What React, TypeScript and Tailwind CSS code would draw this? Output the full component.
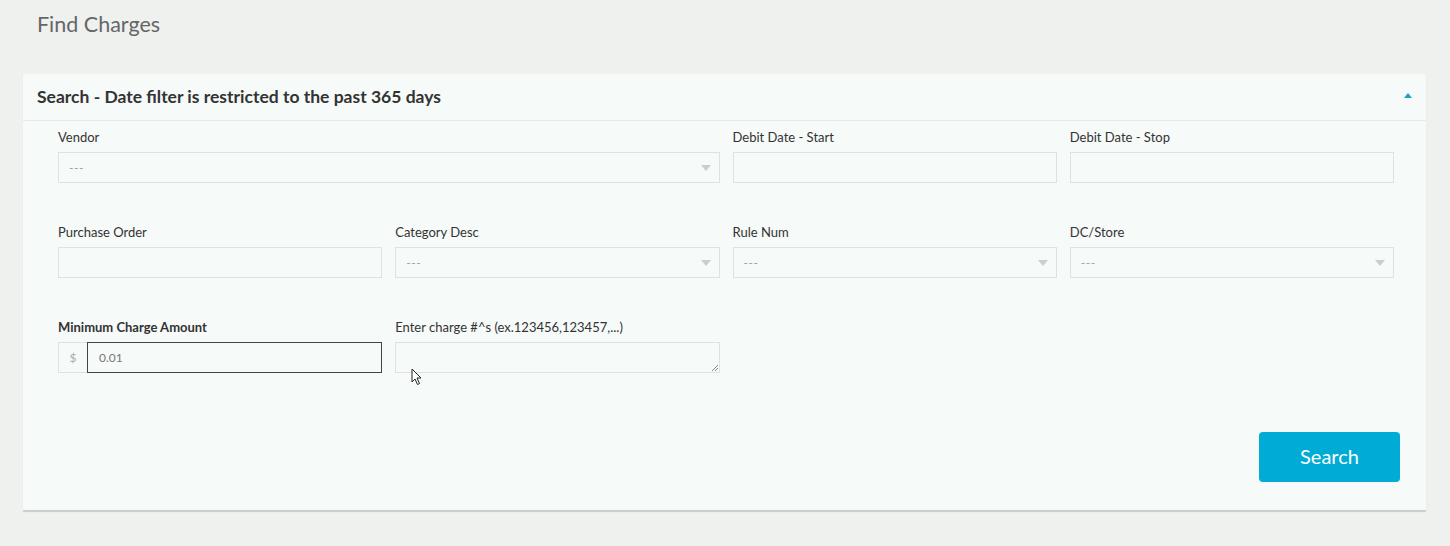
import React from 'react';

const font = { fontFamily: 'Lato, "Open Sans", "Liberation Sans", sans-serif' };

function Label({ children, bold }: { children: React.ReactNode; bold?: boolean }) {
  return (
    <div className={`h-[18px] text-[13px] leading-[18px] mb-[6px] text-[#333] ${bold ? 'font-bold' : ''}`}>
      {children}
    </div>
  );
}

function TextBox() {
  return <div className="h-[31px] border border-[#dde3df] bg-[#f6faf8]" />;
}

function SelectBox() {
  return (
    <div className="h-[31px] border border-[#dde3df] bg-[#f6faf8] flex items-center justify-between pl-[10px] pr-[8px]">
      <span className="text-[12px] text-[#9aa09c] tracking-[0.5px]">---</span>
      <svg width="10" height="6" viewBox="0 0 10 6">
        <path d="M0 0 L10 0 L5 6 Z" fill="#c9cfcb" />
      </svg>
    </div>
  );
}

export default function App() {
  return (
    <div className="min-h-[546px] bg-[#eef1ee] pt-[11px] px-[23px] pb-[36px]" style={font}>
      <h1 className="pl-[14px] text-[21.5px] leading-[26px] text-[#666] mb-[37px]">Find Charges</h1>

      <div className="bg-[#f6faf8] rounded-t-[3px] shadow-[0_2px_1px_rgba(0,0,0,0.15)] w-[1403px]">
        <div className="h-[47px] flex items-center justify-between pl-[14px] pr-[14px] border-b border-[#e6ebe8]">
          <span className="text-[17.5px] font-bold text-[#333]">Search - Date filter is restricted to the past 365 days</span>
          <svg width="8" height="5" viewBox="0 0 8 5" className="mt-[-4px]">
            <path d="M0 5 L8 5 L4 0 Z" fill="#1aa3c8" />
          </svg>
        </div>

        <div className="pt-[7px] pl-[35px] pr-[32px] pb-[28px]">
          <div className="grid grid-cols-4 gap-x-[13px] gap-y-[40px]">
            <div className="col-span-2">
              <Label>Vendor</Label>
              <SelectBox />
            </div>
            <div>
              <Label>Debit Date - Start</Label>
              <TextBox />
            </div>
            <div>
              <Label>Debit Date - Stop</Label>
              <TextBox />
            </div>

            <div>
              <Label>Purchase Order</Label>
              <TextBox />
            </div>
            <div>
              <Label>Category Desc</Label>
              <SelectBox />
            </div>
            <div>
              <Label>Rule Num</Label>
              <SelectBox />
            </div>
            <div>
              <Label>DC/Store</Label>
              <SelectBox />
            </div>

            <div>
              <Label bold>Minimum Charge Amount</Label>
              <div className="flex h-[31px]">
                <div className="w-[29px] border border-r-0 border-[#dde3df] flex items-center justify-center text-[12px] text-[#aaa]">$</div>
                <div className="flex-1 border border-[#444] flex items-center pl-[11px] text-[12px] text-[#777]">0.01</div>
              </div>
            </div>
            <div className="relative">
              <Label>Enter charge #^s (ex.123456,123457,...)</Label>
              <div className="relative h-[31px] border border-[#dde3df] bg-[#f6faf8]">
                <svg width="7" height="7" viewBox="0 0 7 7" className="absolute right-[1px] bottom-[1px]">
                  <path d="M1 7 L7 1 M4 7 L7 4" stroke="#888" strokeWidth="1" />
                </svg>
              </div>
              <svg width="12" height="18" viewBox="0 0 12 18" className="absolute left-[16px] top-[50px]">
                <path d="M1 1 L1 14 L4 11 L6.5 16.5 L8.5 15.5 L6 10 L10 10 Z" fill="#fff" stroke="#222" strokeWidth="1" strokeLinejoin="round" />
              </svg>
            </div>
          </div>

          <div className="flex justify-end mt-[59px] mr-[-6px]">
            <button className="w-[141px] h-[50px] rounded-[4px] bg-[#00acd6] text-white text-[20px] leading-none pb-[2px]">
              Search
            </button>
          </div>
        </div>
      </div>
    </div>
  );
}
